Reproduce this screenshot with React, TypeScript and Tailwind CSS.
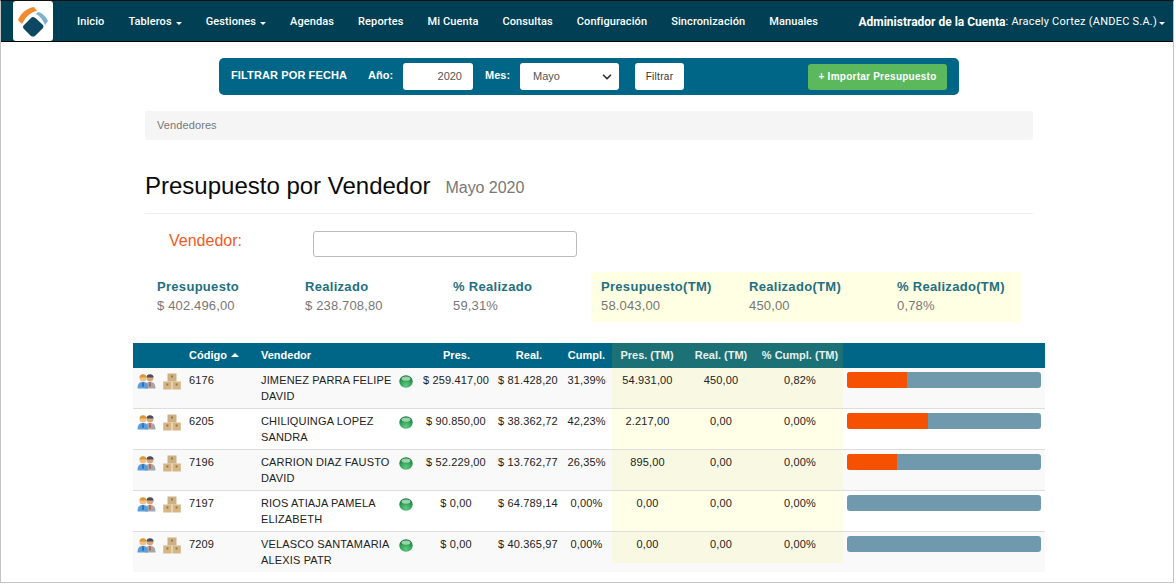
import { ChevronDown } from 'lucide-react';

const navItems = [
  { label: 'Inicio' },
  { label: 'Tableros', caret: true },
  { label: 'Gestiones', caret: true },
  { label: 'Agendas' },
  { label: 'Reportes' },
  { label: 'Mi Cuenta' },
  { label: 'Consultas' },
  { label: 'Configuración' },
  { label: 'Sincronización' },
  { label: 'Manuales' },
];

const stats = [
  { label: 'Presupuesto', value: '$ 402.496,00' },
  { label: 'Realizado', value: '$ 238.708,80' },
  { label: '% Realizado', value: '59,31%' },
];

const statsTm = [
  { label: 'Presupuesto(TM)', value: '58.043,00' },
  { label: 'Realizado(TM)', value: '450,00' },
  { label: '% Realizado(TM)', value: '0,78%' },
];

const rows = [
  { code: '6176', name: 'JIMENEZ PARRA FELIPE DAVID', pres: '$ 259.417,00', real: '$ 81.428,20', cumpl: '31,39%', presTm: '54.931,00', realTm: '450,00', cumplTm: '0,82%', pct: 31 },
  { code: '6205', name: 'CHILIQUINGA LOPEZ SANDRA', pres: '$ 90.850,00', real: '$ 38.362,72', cumpl: '42,23%', presTm: '2.217,00', realTm: '0,00', cumplTm: '0,00%', pct: 41.7 },
  { code: '7196', name: 'CARRION DIAZ FAUSTO DAVID', pres: '$ 52.229,00', real: '$ 13.762,77', cumpl: '26,35%', presTm: '895,00', realTm: '0,00', cumplTm: '0,00%', pct: 26 },
  { code: '7197', name: 'RIOS ATIAJA PAMELA ELIZABETH', pres: '$ 0,00', real: '$ 64.789,14', cumpl: '0,00%', presTm: '0,00', realTm: '0,00', cumplTm: '0,00%', pct: 0 },
  { code: '7209', name: 'VELASCO SANTAMARIA ALEXIS PATR', pres: '$ 0,00', real: '$ 40.365,97', cumpl: '0,00%', presTm: '0,00', realTm: '0,00', cumplTm: '0,00%', pct: 0 },
];

function Logo() {
  return (
    <svg viewBox="0 0 40 40" className="w-10 h-10">
      <path d="M5 19 C8 12 14 7 21 6 L24 10 C18 11 13 15 9 23 Z" fill="#f28a2e" />
      <path d="M25 11 L28 12 C31 14 33 16 35 20 L32 24 C30 19 27 15 23 13 Z" fill="#7fb0cc" />
      <path d="M20 16 Q21.5 16 23 17.5 L30 24 Q31 26 30 27 L22 35 Q20 36 18 35 L11 28 Q9 26 11 24 L18 17 Q19 16 20 16 Z" fill="#0e4763" />
    </svg>
  );
}

function PeopleIcon() {
  return (
    <svg viewBox="0 0 19 16" className="w-[19px] h-4">
      <circle cx="13" cy="5" r="3.4" fill="#d8a47c" />
      <path d="M9.4 4.6 C9.6 0.2 16.4 0.2 16.6 4.6 Z" fill="#4a4f55" />
      <path d="M8 15.5 C8 10 10 9 13 9 C16 9 18.5 10 18.5 15.5 Z" fill="#a3a8ad" />
      <path d="M12.4 9 L13.6 9 L14 13 L13 14 L12 13 Z" fill="#c9573f" />
      <circle cx="6" cy="5" r="3.5" fill="#f0c088" />
      <path d="M2.4 4.6 C2.6 0 9.4 0 9.6 4.6 Z" fill="#d69a35" />
      <path d="M0.5 15.5 C0.5 10 3 9 6 9 C9 9 11 10 11 15.5 Z" fill="#5a9fdc" />
      <path d="M5.4 9 L6.6 9 L7 13 L6 14 L5 13 Z" fill="#2a6cb0" />
    </svg>
  );
}

function BoxesIcon() {
  return (
    <svg viewBox="0 0 18 17" className="w-[18px] h-[17px]">
      <rect x="4.5" y="0.5" width="9" height="8" fill="#cdb083" />
      <rect x="0.2" y="8.5" width="8.4" height="8" fill="#d6b684" />
      <rect x="9.4" y="8.5" width="8.4" height="8" fill="#d6b684" />
      <rect x="8" y="2.5" width="2" height="2" fill="#94784c" />
      <rect x="3.4" y="10.5" width="2" height="2" fill="#94784c" />
      <rect x="12.6" y="10.5" width="2" height="2" fill="#94784c" />
    </svg>
  );
}

function StatusBall() {
  return (
    <svg viewBox="0 0 14 13" className="w-[14px] h-[13px]">
      <defs>
        <radialGradient id="ball" cx="50%" cy="80%" r="65%">
          <stop offset="0%" stopColor="#5fca80" />
          <stop offset="70%" stopColor="#2f9e55" />
          <stop offset="100%" stopColor="#1f7f42" />
        </radialGradient>
      </defs>
      <ellipse cx="7" cy="6.5" rx="6.7" ry="6.2" fill="url(#ball)" />
      <ellipse cx="7" cy="3.6" rx="4.4" ry="2.2" fill="#c4e8cf" opacity="0.75" />
    </svg>
  );
}

export default function App() {
  return (
    <div className="h-[587px] w-[1176px] overflow-hidden bg-white font-['Liberation_Sans',Arial,sans-serif] text-[#333]">
      <div className="h-[583px] w-[1174px] border-x border-b border-[#c4c4c4] border-t border-t-[#111]">
        <nav className="flex h-[41px] items-center border-b border-black bg-[#003f54] pl-3 pr-2 text-[11px] text-white">
          <div className="mr-3 flex h-10 w-10 shrink-0 rounded-[3px] bg-white">
            <Logo />
          </div>
          <ul className="flex items-center pt-[2px]">
            {navItems.map((item) => (
              <li key={item.label} className="flex items-center whitespace-nowrap px-3 font-['Roboto',sans-serif] font-medium tracking-[0.1px]">
                {item.label}
                {item.caret && <span className="ml-1 mt-[2px] border-x-[3.5px] border-t-[3.5px] border-x-transparent border-t-white" />}
              </li>
            ))}
          </ul>
          <div className="ml-auto flex items-center whitespace-nowrap pt-[2px] font-['Roboto',sans-serif] tracking-[0.23px]">
            <span className="text-[12px] font-bold tracking-normal">Administrador de la Cuenta</span>: Aracely Cortez (ANDEC S.A.)
            <span className="ml-[2px] mt-[2px] border-x-[3.5px] border-t-[3.5px] border-x-transparent border-t-white" />
          </div>
        </nav>

        <div className="flex flex-col pt-4">
          <div className="ml-[218px] flex h-[37px] w-[740px] items-center rounded-[5px] bg-[#006687] pl-3 text-[11px] font-bold text-white">
            <span className="w-[137px] -translate-y-px tracking-[0.12px]">FILTRAR POR FECHA</span>
            <span className="w-[35px] -translate-y-px">Año:</span>
            <span className="flex h-[27px] w-[70px] items-center justify-end rounded-[3px] bg-white pr-[11px] text-[11px] font-normal text-[#555]">2020</span>
            <span className="ml-3 w-[35px] -translate-y-px">Mes:</span>
            <span className="flex h-[27px] w-[99px] items-center justify-between rounded-[3px] bg-white pl-[13px] pr-[5px] text-[11px] font-normal text-[#555]">
              Mayo
              <ChevronDown className="h-[14px] w-[14px] text-[#333]" strokeWidth={3} />
            </span>
            <span className="ml-4 flex h-[27px] w-[49px] items-center justify-center rounded-[3px] bg-white text-[10px] font-normal tracking-[0.3px] text-[#333]">Filtrar</span>
            <span className="ml-[124px] flex h-[26px] w-[139px] items-center justify-center rounded-[3px] bg-[#5cb85c] text-[10px] tracking-[0.25px]">+ Importar Presupuesto</span>
          </div>

          <div className="ml-[144px] mt-4 flex h-[29px] w-[888px] items-center rounded-[3px] bg-[#f5f5f5] px-3 text-[11px] tracking-[0.1px] text-[#777]">Vendedores</div>

          <div className="ml-[144px] mr-[140px] mt-[29px] flex h-[45px] items-baseline gap-[15px] border-b border-[#eee]">
            <h1 className="text-[24px] leading-[34px] text-[#0a0a0a]">Presupuesto por Vendedor</h1>
            <small className="-translate-y-px text-[16px] tracking-[-0.05px] text-[#777]">Mayo 2020</small>
          </div>

          <div className="ml-[168px] mt-[17px] flex h-[26px] items-start">
            <label className="w-[144px] text-[16px] leading-[20px] text-[#f25a1d]">Vendedor:</label>
            <div className="h-[26px] w-[264px] rounded-[3px] border border-[#bbb] bg-white" />
          </div>

          <div className="ml-[144px] mt-[15px] flex h-[50px]">
            <div className="flex w-[446px] pl-3 pt-[7px]">
              {stats.map((s) => (
                <div key={s.label} className="w-[148px] shrink-0">
                  <div className="text-[13px] font-bold leading-4 tracking-[0.3px] text-[#1f6f82]">{s.label}</div>
                  <div className="mt-px text-[13px] leading-[20px] tracking-[0.15px] text-[#777]">{s.value}</div>
                </div>
              ))}
            </div>
            <div className="flex w-[430px] bg-[#ffffe3] pl-[10px] pt-[7px]">
              {statsTm.map((s) => (
                <div key={s.label} className="w-[148px] shrink-0">
                  <div className="text-[13px] font-bold leading-4 tracking-[0.3px] text-[#1f6f82]">{s.label}</div>
                  <div className="mt-px text-[13px] leading-[20px] tracking-[0.15px] text-[#777]">{s.value}</div>
                </div>
              ))}
            </div>
          </div>

          <table className="ml-[132px] mt-[21px] w-[912px] table-fixed border-separate border-spacing-0 text-[11px] text-[#222]">
            <colgroup>
              <col className="w-[26px]" />
              <col className="w-[26px]" />
              <col className="w-[72px]" />
              <col className="w-[164px]" />
              <col className="w-[69px]" />
              <col className="w-[71px]" />
              <col className="w-[51px]" />
              <col className="w-[73px]" />
              <col className="w-[72px]" />
              <col className="w-[86px]" />
              <col className="w-[202px]" />
            </colgroup>
            <thead>
              <tr className="h-[25px] bg-[#006687] font-bold text-white">
                <th />
                <th />
                <th className="pl-1 text-left">
                  Código
                  <span className="ml-[4px] inline-block -translate-y-[2px] border-x-[4px] border-b-[4px] border-x-transparent border-b-white" />
                </th>
                <th className="pl-1 text-left">Vendedor</th>
                <th className="pl-[2px] text-center">Pres.</th>
                <th className="pl-[7px] text-center">Real.</th>
                <th className="text-center">Cumpl.</th>
                <th className="bg-[#1b7175] pr-[3px] text-center text-[#e8f0ee]">Pres. (TM)</th>
                <th className="bg-[#1b7175] text-center text-[#e8f0ee]">Real. (TM)</th>
                <th className="bg-[#1b7175] text-center text-[#e8f0ee]">% Cumpl. (TM)</th>
                <th />
              </tr>
            </thead>
            <tbody className="tracking-[0.15px]">
              {rows.map((r, i) => {
                const isLast = i === rows.length - 1;
                const line = isLast ? '' : 'border-b border-[#ddd]';
                const tm = isLast
                  ? 'bg-[linear-gradient(#f9f9e3_31px,transparent_31px)]'
                  : i % 2 === 0
                    ? 'bg-[#f9f9e3]'
                    : 'bg-[#ffffe8]';
                return (
                  <tr key={r.code} className={`${isLast ? 'h-10' : 'h-[41px]'} ${i % 2 === 0 ? 'bg-[#f9f9f9]' : 'bg-white'}`}>
                    <td className={`pl-1 pt-[5px] align-top ${line}`}><PeopleIcon /></td>
                    <td className={`pl-1 pt-[5px] align-top ${line}`}><BoxesIcon /></td>
                    <td className={`pl-1 pt-1 align-top ${line}`}>{r.code}</td>
                    <td className={`pl-1 pt-1 align-top ${line}`}>
                      <div className="flex gap-1">
                        <span className="w-[134px] leading-4">{r.name}</span>
                        <span className="pt-[3px]"><StatusBall /></span>
                      </div>
                    </td>
                    <td className={`pl-[1px] pt-1 text-center align-top ${line}`}>{r.pres}</td>
                    <td className={`pl-[5px] pt-1 text-center align-top ${line}`}>{r.real}</td>
                    <td className={`pt-1 text-center align-top ${line}`}>{r.cumpl}</td>
                    <td className={`pr-[2px] pt-1 text-center align-top ${line} ${tm}`}>{r.presTm}</td>
                    <td className={`pt-1 text-center align-top ${line} ${tm}`}>{r.realTm}</td>
                    <td className={`pt-1 text-center align-top ${line} ${tm}`}>{r.cumplTm}</td>
                    <td className={`px-1 pt-[4px] align-top ${line}`}>
                      <div className="h-4 w-[194px] overflow-hidden rounded-[3px] bg-[#7199ad]">
                        <div className="h-4 bg-[#f55100]" style={{ width: `${r.pct}%` }} />
                      </div>
                    </td>
                  </tr>
                );
              })}
            </tbody>
          </table>
        </div>
      </div>
    </div>
  );
}
